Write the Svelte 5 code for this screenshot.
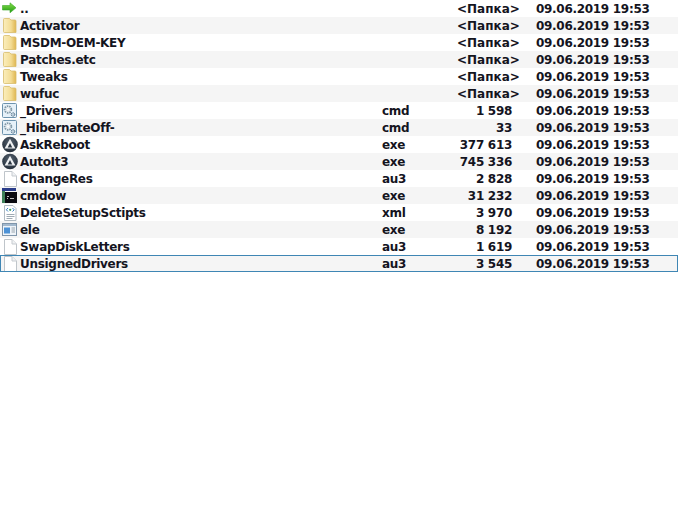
<script>
  const D = '09.06.2019 19:53';
  const rows = [
    ['up', '..', '', '<Папка>'],
    ['folder', 'Activator', '', '<Папка>'],
    ['folder', 'MSDM-OEM-KEY', '', '<Папка>'],
    ['folder', 'Patches.etc', '', '<Папка>'],
    ['folder', 'Tweaks', '', '<Папка>'],
    ['folder', 'wufuc', '', '<Папка>'],
    ['gear', '_Drivers', 'cmd', '1 598'],
    ['gear', '_HibernateOff-', 'cmd', '33'],
    ['autoit', 'AskReboot', 'exe', '377 613'],
    ['autoit', 'AutoIt3', 'exe', '745 336'],
    ['doc', 'ChangeRes', 'au3', '2 828'],
    ['console', 'cmdow', 'exe', '31 232'],
    ['xml', 'DeleteSetupSctipts', 'xml', '3 970'],
    ['win', 'ele', 'exe', '8 192'],
    ['doc', 'SwapDiskLetters', 'au3', '1 619'],
    ['doc', 'UnsignedDrivers', 'au3', '3 545']
  ];
</script>

<svg class="defs" width="0" height="0" aria-hidden="true">
  <defs>
    <linearGradient id="fold" x1="0" y1="0" x2="1" y2="0">
      <stop offset="0" stop-color="#fbeebc"/>
      <stop offset=".6" stop-color="#f3dc94"/>
      <stop offset="1" stop-color="#dfb650"/>
    </linearGradient>
    <linearGradient id="arrow" x1="0" y1="0" x2="0" y2="1">
      <stop offset="0" stop-color="#8ae04a"/>
      <stop offset="1" stop-color="#1d9a12"/>
    </linearGradient>
    <radialGradient id="ball" cx=".5" cy=".35" r=".7">
      <stop offset="0" stop-color="#56626f"/>
      <stop offset="1" stop-color="#1f2935"/>
    </radialGradient>
  </defs>
</svg>

<div class="list">
  {#each rows as [icon, name, ext, size], i}
    <div class="row" class:alt={i % 2 === 1} class:sel={i === rows.length - 1}>
      <svg class="icon" viewBox="0 0 18 17" width="18" height="17">
        {#if icon === 'up'}
          <path d="M2.500 5.500H10V2.800L16 7.800 10 12.800V10H2.500z" fill="url(#arrow)" stroke="#3aa82a" stroke-width=".6"/>
        {:else if icon === 'folder'}
          <path d="M3.500 2.500Q3.500 1.500 4.500 1.500H9.500L11 3H15Q16 3 16 4V15.500H4.500Q3.500 15.500 3.500 14.500z" fill="url(#fold)" stroke="#d8bc6c" stroke-width=".8"/>
        {:else if icon === 'gear'}
          <rect x="2.500" y="1.500" width="14" height="14" rx="1" fill="#e6f1f9" stroke="#6d93ae"/>
          <circle cx="8" cy="7.500" r="3.400" fill="#e2e9ee" stroke="#7f97a6" stroke-width="1.700" stroke-dasharray="1.500 .9"/>
          <circle cx="8" cy="7.500" r="1.100" fill="#fff"/>
          <circle cx="13" cy="12.500" r="1.800" fill="#c0d0dc" stroke="#4e7189" stroke-dasharray="1.200 .6"/>
        {:else if icon === 'autoit'}
          <circle cx="10" cy="8.500" r="7.800" fill="url(#ball)"/>
          <path d="M10 2.800 15.500 12.500H4.500z" fill="#eef0f2"/>
          <path d="M10 7 12.300 11.500H7.700z" fill="#2b3642"/>
        {:else if icon === 'doc'}
          <path d="M4.500 1.500H12L16.500 6V16.500H4.500z" fill="#fff" stroke="#bfc5ca"/>
          <path d="M12 1.500V6H16.500" fill="#f0f2f4" stroke="#c6cbd0"/>
        {:else if icon === 'console'}
          <rect x="2" y="1" width="14" height="3" fill="#2a3c8a"/>
          <rect x="2" y="4" width="3" height="12" fill="#3e8059"/>
          <rect x="5" y="5" width="12" height="11" fill="#0a0a10"/>
          <path d="M7 9.500h2M7 11.500h1M10 11.500h4" stroke="#bdbdbd"/>
        {:else if icon === 'xml'}
          <path d="M4.500 1.500H13L16 4.500V16.500H4.500z" fill="#fff" stroke="#b0bac2"/>
          <path d="M8 4 6.300 5.800 8 7.500M12.500 4l1.700 1.800-1.700 1.700" fill="none" stroke="#3a7fc4"/>
          <circle cx="10.200" cy="5.800" r="1.100" fill="#3a9a5c"/>
          <path d="M6.500 10.500h8M6.500 12.500h8M6.500 14.500h6" stroke="#a0abb4"/>
        {:else if icon === 'win'}
          <rect x="2.500" y="2.500" width="14" height="12" fill="#eff4f9" stroke="#7f95aa"/>
          <rect x="3" y="3" width="13" height="2" fill="#a3b9ce"/>
          <rect x="4" y="6.500" width="6" height="6" fill="#4d92d6"/>
          <path d="M11.500 7h3.500M11.500 9h3.500M11.500 11h3.500" stroke="#9aa5ae"/>
        {/if}
      </svg>
      <span class="name">{name}</span>
      <span class="ext">{ext}</span>
      <span class="size" class:dir={size === '<Папка>'}>{size}</span>
      <span class="date">{D}</span>
    </div>
  {/each}
</div>

<style>
  :global(body) {
    margin: 0;
    background: #fff;
  }
  .defs {
    position: absolute;
  }
  .list {
    width: 678px;
    font: bold 12px "DejaVu Sans", Verdana, sans-serif;
    letter-spacing: -0.3px;
    color: #14141e;
  }
  .row {
    display: grid;
    grid-template-columns: 20px 362px 75px 55px 24px 1fr;
    grid-template-areas: "i n e s . d";
    height: 17px;
    line-height: 17px;
    align-items: start;
    white-space: nowrap;
  }
  .row span {
    padding-top: 1px;
    height: 16px;
  }
  .alt {
    background: #f5f5f5;
  }
  .sel {
    outline: 1px solid #3f86b4;
    outline-offset: -1px;
  }
  .icon {
    grid-area: i;
    display: block;
  }
  .name { grid-area: n; }
  .ext { grid-area: e; }
  .size {
    grid-area: s;
    text-align: right;
  }
  .size.dir {
    text-align: left;
    letter-spacing: 0;
  }
  .date { grid-area: d; }
</style>
